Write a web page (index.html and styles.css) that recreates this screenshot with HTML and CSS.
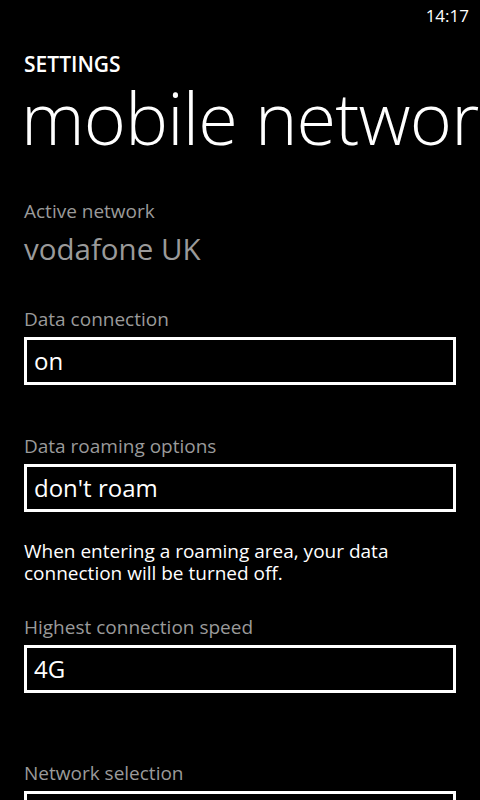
FILE: index.html
```html
<!DOCTYPE html>
<html>
<head>
    <meta charset="utf-8">
    <link rel="stylesheet" href="styles.css">
</head>
<body>
    <div class="status-bar"><span class="clock">14:17</span></div>

    <div class="page-header">
        <div class="app-title">SETTINGS</div>
        <div class="page-title">mobile network</div>
    </div>

    <div class="content">
        <div class="setting info">
            <div class="label">Active network</div>
            <div class="value">vodafone UK</div>
        </div>

        <div class="setting first-picker">
            <div class="label">Data connection</div>
            <div class="picker">on</div>
        </div>

        <div class="setting after-picker">
            <div class="label">Data roaming options</div>
            <div class="picker">don't roam</div>
            <div class="hint">When entering a roaming area, your data connection will be turned off.</div>
        </div>

        <div class="setting after-hint">
            <div class="label">Highest connection speed</div>
            <div class="picker">4G</div>
        </div>

        <div class="setting spaced">
            <div class="label">Network selection</div>
            <div class="picker">automatic</div>
        </div>
    </div>
</body>
</html>
```

FILE: styles.css
```css
html, body {
    margin: 0;
    padding: 0;
    background: #000;
    color: #fff;
    font-family: "Open Sans", "Noto Sans", sans-serif;
    overflow: hidden;
}
.status-bar {
    height: 32px;
    display: flex;
    justify-content: flex-end;
    padding-right: 11px;
}
.clock {
    font-size: 17px;
    line-height: 32px;
}
.page-header {
    padding-left: 24px;
    white-space: nowrap;
    overflow: hidden;
}
.app-title {
    font-size: 21px;
    font-weight: 600;
    line-height: 24px;
    margin-top: 20px;
}
.page-title {
    font-size: 72px;
    font-weight: 300;
    line-height: 80px;
    margin-top: 1px;
    margin-left: -3px;
    letter-spacing: -0.8px;
}
.content {
    padding: 0 24px;
}
.setting {
    margin-top: 38px;
}
.info {
    margin-top: 42px;
}
.label {
    color: #9a9a9a;
    font-size: 19px;
    line-height: 24px;
}
.value {
    color: #9a9a9a;
    font-size: 29.5px;
    line-height: 38px;
    margin-top: 7px;
}
.first-picker {
    margin-top: 39px;
}
.after-picker {
    margin-top: 49px;
}
.after-hint {
    margin-top: 31px;
}
.spaced {
    margin-top: 68px;
}
.picker {
    margin-top: 6px;
    height: 42px;
    border: 3px solid #fff;
    padding: 0 7px;
    font-size: 24px;
    line-height: 42px;
    width: 412px;
}
.hint {
    margin-top: 28px;
    font-size: 19px;
    line-height: 22px;
    width: 410px;
}
```
